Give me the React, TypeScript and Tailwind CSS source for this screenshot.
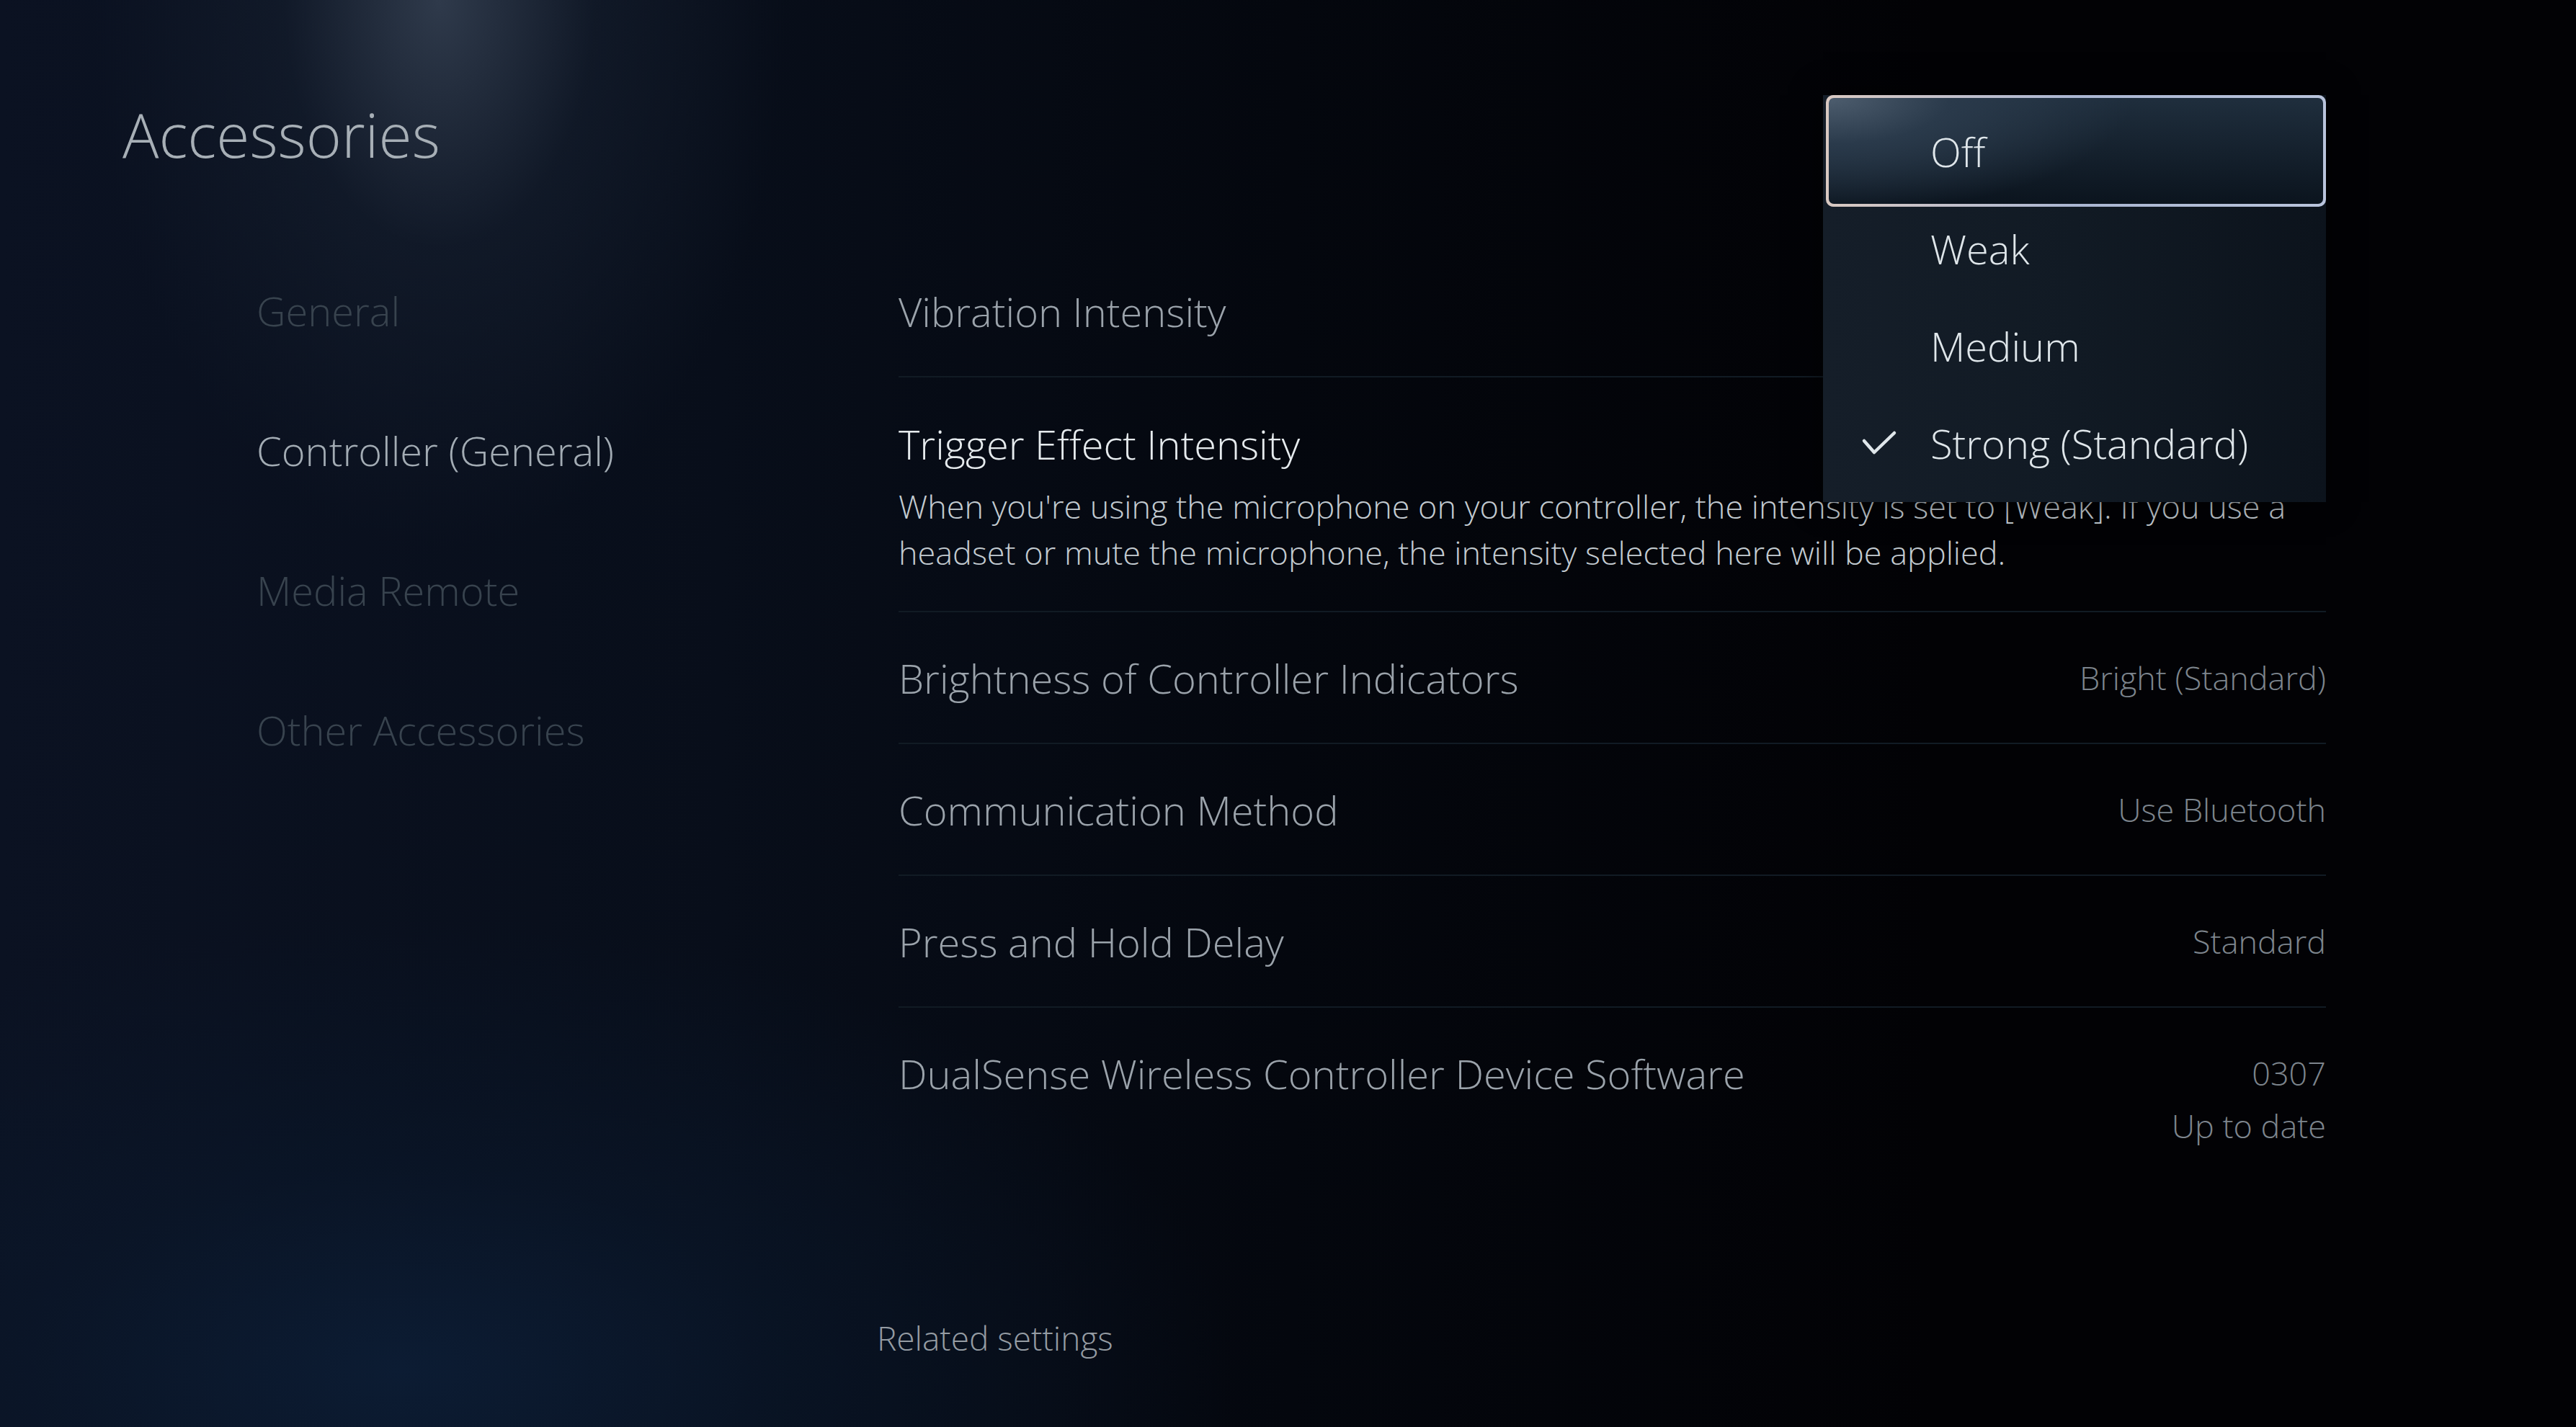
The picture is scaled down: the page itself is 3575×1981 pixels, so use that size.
import React from "react";

const navItems = [
  { label: "General", active: false },
  { label: "Controller (General)", active: true },
  { label: "Media Remote", active: false },
  { label: "Other Accessories", active: false },
];

const options = [
  { label: "Off", focused: true, checked: false },
  { label: "Weak", focused: false, checked: false },
  { label: "Medium", focused: false, checked: false },
  { label: "Strong (Standard)", focused: false, checked: true },
];

function SimpleRow({ label, value }: { label: string; value: string }) {
  return (
    <div className="h-[183px] flex items-center justify-between border-b-2 border-[#111b24]">
      <span className="text-[56px] leading-none text-[#9ba3ab]">{label}</span>
      <span className="text-[45px] leading-none text-[#7d858d]">{value}</span>
    </div>
  );
}

function Check() {
  return (
    <svg width="50" height="36" viewBox="0 0 50 36" fill="none">
      <polyline
        points="4,15 18,31 46,4"
        stroke="#dfe6ea"
        strokeWidth="4.5"
        strokeLinecap="round"
        strokeLinejoin="round"
      />
    </svg>
  );
}

export default function App() {
  return (
    <div
      className="relative w-full h-[1981px] overflow-hidden font-['Open_Sans',sans-serif] font-light bg-[#020205] bg-[radial-gradient(ellipse_480px_760px_at_610px_0px,#2f3a4b_0%,rgba(24,34,50,0.5)_45%,transparent_100%),radial-gradient(ellipse_1150px_620px_at_560px_1900px,#0c1c33_0%,rgba(10,24,44,0.55)_45%,transparent_100%),linear-gradient(to_right,#0b1222_0%,#080e1a_28%,#04070e_50%,#020205_75%,#020205_100%)]"
    >
      <header className="h-[334px] pt-[145px] pl-[170px]">
        <h1 className="text-[84px] leading-none text-[#a7afb6] font-light">Accessories</h1>
      </header>

      <div className="flex">
        <nav className="w-[1247px] pl-[356px] flex flex-col">
          {navItems.map((n) => (
            <div key={n.label} className="h-[194px] flex items-center">
              <span
                className={
                  n.active
                    ? "text-[56px] leading-none text-[#a3acb4]"
                    : "text-[56px] leading-none text-[#38434e]"
                }
              >
                {n.label}
              </span>
            </div>
          ))}
        </nav>

        <main className="w-[1981px] pt-[8px] flex flex-col">
          <div className="h-[182px] flex items-center border-b-2 border-[#111b24]">
            <span className="text-[56px] leading-none text-[#9ba3ab]">Vibration Intensity</span>
          </div>

          <div className="h-[326px] pt-[64px] border-b-2 border-[#111b24]">
            <div className="text-[56px] leading-none text-[#e6ebee]">Trigger Effect Intensity</div>
            <p className="mt-[27px] text-[45px] leading-[64px] text-[#c3cbd1]">
              When you're using the microphone on your controller, the intensity is set to [Weak]. If you use a
              <br />
              headset or mute the microphone, the intensity selected here will be applied.
            </p>
          </div>

          <SimpleRow label="Brightness of Controller Indicators" value="Bright (Standard)" />
          <SimpleRow label="Communication Method" value="Use Bluetooth" />
          <SimpleRow label="Press and Hold Delay" value="Standard" />

          <div className="h-[183px] pt-[54px] flex items-start justify-between">
            <span className="mt-[9px] text-[56px] leading-none text-[#9ba3ab]">
              DualSense Wireless Controller Device Software
            </span>
            <div className="flex flex-col items-end text-[45px] leading-[73px] text-[#7d858d]">
              <span>0307</span>
              <span>Up to date</span>
            </div>
          </div>

          <div className="-ml-[30px] mt-[252px] text-[46px] leading-none text-[#959ca3]">Related settings</div>
        </main>
      </div>

      {/* Dropdown overlay */}
      <div className="absolute left-[2530px] top-[132px] w-[698px] pt-[10px] pb-[15px] bg-gradient-to-r from-[#151e29] via-[#111a24] to-[#0c131c] shadow-[0_0_40px_rgba(0,0,0,0.6)]">
        {options.map((o) => (
          <div key={o.label} className="relative h-[135px] flex items-center">
            {o.focused && (
              <div className="absolute left-[4px] right-0 -top-[10px] -bottom-[10px] rounded-[10px] p-[4px] bg-gradient-to-r from-[#d9c9c2] via-[#aab6d2] to-[#b9c4dc]">
                <div className="w-full h-full rounded-[7px] bg-[radial-gradient(ellipse_420px_160px_at_0px_0px,#4d5d6e_0%,#2a3a4b_40%,transparent_100%),linear-gradient(to_bottom,#1f2e3d_0%,#0b141e_100%)]" />
              </div>
            )}
            <div className="relative w-[149px] flex justify-end pr-[46px]">
              {o.checked && <Check />}
            </div>
            <span className="relative text-[56px] leading-none text-[#dfe6ea]">{o.label}</span>
          </div>
        ))}
      </div>
    </div>
  );
}
